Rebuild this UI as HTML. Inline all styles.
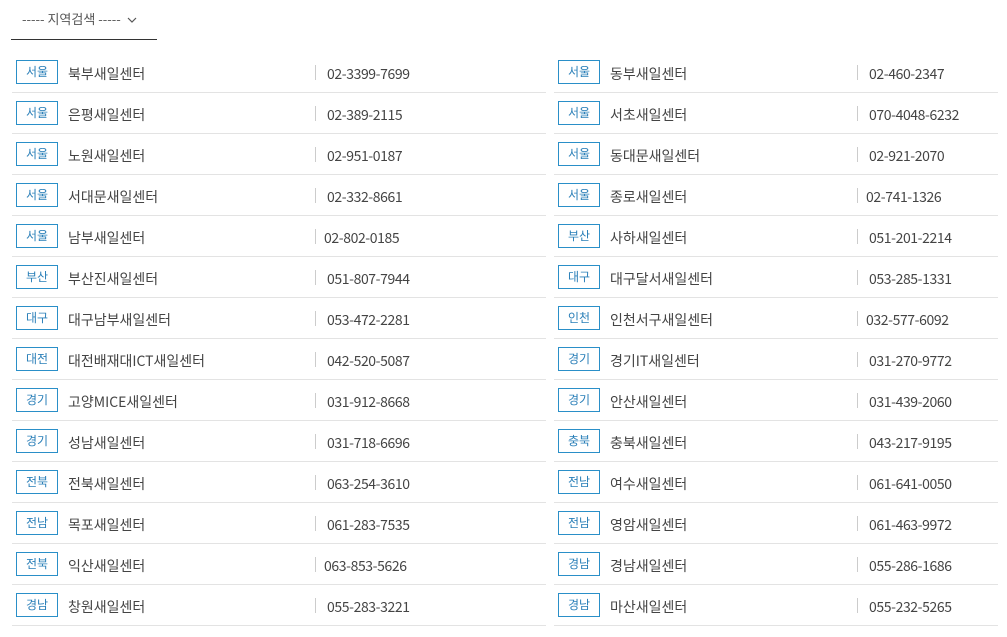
<!DOCTYPE html><html><head><meta charset="utf-8"><style>
body{margin:0;width:1007px;height:637px;background:#fff;font-family:"Noto Sans CJK KR","Liberation Sans",sans-serif;color:#444;position:relative;overflow:hidden}
.sel{position:absolute;left:11px;top:0;width:146px;height:39px;border-bottom:1px solid #333;font-size:13px;color:#555}
.sel span{position:absolute;left:11px;top:9px;line-height:20px}
.col{position:absolute;top:52px}
.row{height:40px;border-bottom:1px solid #e3e3e3;position:relative;font-size:14px;line-height:20px}
.b{position:absolute;left:4px;top:8px;width:40px;height:22px;border:1px solid #2a8fc8;color:#2a7fb8;font-size:12px;text-align:center;line-height:21px;box-sizing:content-box}
.n{position:absolute;left:56px;top:12px}
.s{position:absolute;left:303px;top:13px;width:1px;height:15px;background:#ccc}
.p{position:absolute;left:315px;top:12px;letter-spacing:-0.4px}
</style></head><body>
<div class="sel"><span>----- 지역검색 ----- <svg width="10" height="7" viewBox="0 0 10 7" style="margin-left:3px"><path d="M1 1l4 4 4-4" fill="none" stroke="#555" stroke-width="1.2"/></svg></span></div>
<div class="col" style="left:12px;width:534px">
<div class="row"><div class="b">서울</div><div class="n">북부새일센터</div><div class="s"></div><div class="p">02-3399-7699</div></div>
<div class="row"><div class="b">서울</div><div class="n">은평새일센터</div><div class="s"></div><div class="p">02-389-2115</div></div>
<div class="row"><div class="b">서울</div><div class="n">노원새일센터</div><div class="s"></div><div class="p">02-951-0187</div></div>
<div class="row"><div class="b">서울</div><div class="n">서대문새일센터</div><div class="s"></div><div class="p">02-332-8661</div></div>
<div class="row"><div class="b">서울</div><div class="n">남부새일센터</div><div class="s"></div><div class="p" style="left:312px">02-802-0185</div></div>
<div class="row"><div class="b">부산</div><div class="n">부산진새일센터</div><div class="s"></div><div class="p">051-807-7944</div></div>
<div class="row"><div class="b">대구</div><div class="n">대구남부새일센터</div><div class="s"></div><div class="p">053-472-2281</div></div>
<div class="row"><div class="b">대전</div><div class="n">대전배재대ICT새일센터</div><div class="s"></div><div class="p">042-520-5087</div></div>
<div class="row"><div class="b">경기</div><div class="n">고양MICE새일센터</div><div class="s"></div><div class="p">031-912-8668</div></div>
<div class="row"><div class="b">경기</div><div class="n">성남새일센터</div><div class="s"></div><div class="p">031-718-6696</div></div>
<div class="row"><div class="b">전북</div><div class="n">전북새일센터</div><div class="s"></div><div class="p">063-254-3610</div></div>
<div class="row"><div class="b">전남</div><div class="n">목포새일센터</div><div class="s"></div><div class="p">061-283-7535</div></div>
<div class="row"><div class="b">전북</div><div class="n">익산새일센터</div><div class="s"></div><div class="p" style="left:312px">063-853-5626</div></div>
<div class="row"><div class="b">경남</div><div class="n">창원새일센터</div><div class="s"></div><div class="p">055-283-3221</div></div>
</div>
<div class="col" style="left:554px;width:444px">
<div class="row"><div class="b">서울</div><div class="n">동부새일센터</div><div class="s"></div><div class="p">02-460-2347</div></div>
<div class="row"><div class="b">서울</div><div class="n">서초새일센터</div><div class="s"></div><div class="p">070-4048-6232</div></div>
<div class="row"><div class="b">서울</div><div class="n">동대문새일센터</div><div class="s"></div><div class="p">02-921-2070</div></div>
<div class="row"><div class="b">서울</div><div class="n">종로새일센터</div><div class="s"></div><div class="p" style="left:312px">02-741-1326</div></div>
<div class="row"><div class="b">부산</div><div class="n">사하새일센터</div><div class="s"></div><div class="p">051-201-2214</div></div>
<div class="row"><div class="b">대구</div><div class="n">대구달서새일센터</div><div class="s"></div><div class="p">053-285-1331</div></div>
<div class="row"><div class="b">인천</div><div class="n">인천서구새일센터</div><div class="s"></div><div class="p" style="left:312px">032-577-6092</div></div>
<div class="row"><div class="b">경기</div><div class="n">경기IT새일센터</div><div class="s"></div><div class="p">031-270-9772</div></div>
<div class="row"><div class="b">경기</div><div class="n">안산새일센터</div><div class="s"></div><div class="p">031-439-2060</div></div>
<div class="row"><div class="b">충북</div><div class="n">충북새일센터</div><div class="s"></div><div class="p">043-217-9195</div></div>
<div class="row"><div class="b">전남</div><div class="n">여수새일센터</div><div class="s"></div><div class="p">061-641-0050</div></div>
<div class="row"><div class="b">전남</div><div class="n">영암새일센터</div><div class="s"></div><div class="p">061-463-9972</div></div>
<div class="row"><div class="b">경남</div><div class="n">경남새일센터</div><div class="s"></div><div class="p">055-286-1686</div></div>
<div class="row"><div class="b">경남</div><div class="n">마산새일센터</div><div class="s"></div><div class="p">055-232-5265</div></div>
</div>
</body></html>
